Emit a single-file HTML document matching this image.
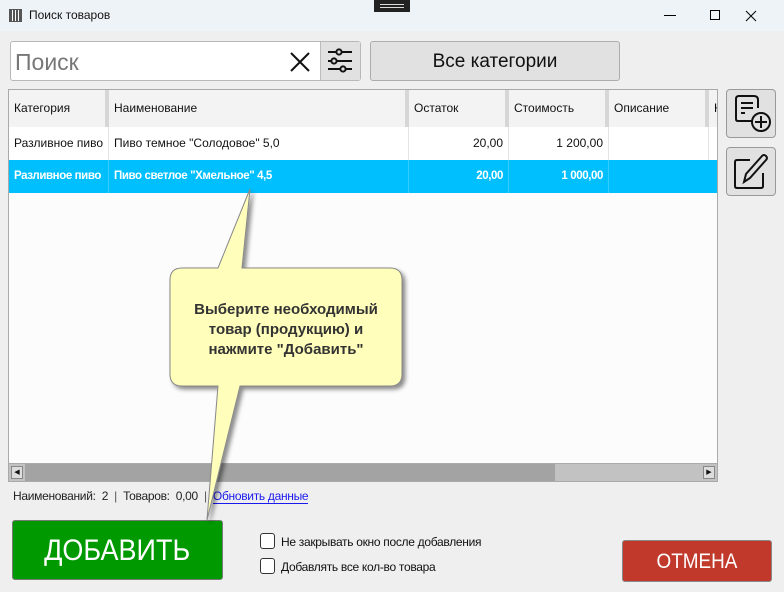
<!DOCTYPE html>
<html><head><meta charset="utf-8"><style>
*{box-sizing:border-box;margin:0;padding:0}
body{width:784px;height:592px;background:#efefef;font-family:"Liberation Sans","DejaVu Sans",sans-serif;position:relative;overflow:hidden;font-size:12px;color:#111}
.a{position:absolute}
.title{left:0;top:0;width:784px;height:31px;background:#eef3f8}
.cell{position:absolute;height:33px;line-height:33px;padding:0 5px;font-size:12px;white-space:nowrap;overflow:hidden;border-right:1px solid #e4e4e4}
.b{color:#fff;font-weight:bold;border-color:#33ccff;letter-spacing:-0.4px;font-size:11.5px}
.hd{position:absolute;top:0;height:37px;line-height:37px;padding:0 5px;font-size:12px;border-right:4px solid #d6d6d6;background:#f3f3f3}
</style></head><body>
<div class="a title"></div>
<div class="a" style="left:9px;top:9px;width:13px;height:13px;border:1px solid #555;background:repeating-linear-gradient(90deg,#555 0 2px,#fff 2px 3px)"></div>
<div class="a" style="left:29px;top:8px;font-size:12px">Поиск товаров</div>
<div class="a" style="left:374px;top:0;width:36px;height:12px;background:#222"></div>
<div class="a" style="left:380px;top:4px;width:24px;height:1px;background:#ddd"></div><div class="a" style="left:380px;top:7px;width:24px;height:1px;background:#ddd"></div>
<div class="a" style="left:664px;top:15px;width:12px;height:1px;background:#000"></div>
<div class="a" style="left:710px;top:10px;width:10px;height:10px;border:1px solid #000"></div>
<svg class="a" style="left:745px;top:10px" width="12" height="12"><path d="M1 1L11 11M11 1L1 11" stroke="#000" stroke-width="1"/></svg>

<div class="a" style="left:10px;top:41px;width:351px;height:40px;border:1px solid #b8b8b8;border-radius:3px;background:#fff"></div>
<div class="a" style="left:15px;top:49px;font-size:23px;color:#777">Поиск</div>
<svg class="a" style="left:289px;top:51px" width="22" height="22"><path d="M2 2L20 20M20 2L2 20" stroke="#111" stroke-width="2"/></svg>
<div class="a" style="left:320px;top:42px;width:40px;height:38px;background:#e1e1e1;border-left:1px solid #bbb"></div>
<svg class="a" style="left:327px;top:48px" width="26" height="26" fill="none" stroke="#111" stroke-width="2"><path d="M1 4H9M15 4H25M1 13H4M10 13H25M1 21H13M19 21H25"/><circle cx="12" cy="4" r="2.6"/><circle cx="7" cy="13" r="2.6"/><circle cx="16" cy="21" r="2.6"/></svg>
<div class="a" style="left:370px;top:41px;width:250px;height:40px;border:1px solid #adadad;border-radius:3px;background:#e1e1e1;text-align:center;line-height:40px;font-size:19px">Все категории</div>

<div class="a" style="left:8px;top:89px;width:710px;height:393px;border:1px solid #aaa;background:#fcfcfc;overflow:hidden">
 <div class="a" style="left:0;top:0;width:710px;height:37px;background:#f3f3f3;border-bottom:1px solid #ccc"></div>
 <div class="hd" style="left:0;width:100px">Категория</div>
 <div class="hd" style="left:100px;width:300px">Наименование</div>
 <div class="hd" style="left:400px;width:100px">Остаток</div>
 <div class="hd" style="left:500px;width:100px">Стоимость</div>
 <div class="hd" style="left:600px;width:100px">Описание</div>
 <div class="hd" style="left:700px;width:20px;border:none">К</div>
 <div class="a" style="left:0;top:37px;width:710px;height:33px;background:#fff"></div>
 <div class="cell" style="left:0;top:37px;width:100px">Разливное пиво</div>
 <div class="cell" style="left:100px;top:37px;width:300px">Пиво темное "Солодовое" 5,0</div>
 <div class="cell" style="left:400px;top:37px;width:100px;text-align:right">20,00</div>
 <div class="cell" style="left:500px;top:37px;width:100px;text-align:right">1 200,00</div>
 <div class="cell" style="left:600px;top:37px;width:100px"></div>
 <div class="a" style="left:0;top:70px;width:710px;height:33px;background:#00bfff"></div>
 <div class="cell b" style="left:0;top:70px;width:100px">Разливное пиво</div>
 <div class="cell b" style="left:100px;top:70px;width:300px">Пиво светлое "Хмельное" 4,5</div>
 <div class="cell b" style="left:400px;top:70px;width:100px;text-align:right">20,00</div>
 <div class="cell b" style="left:500px;top:70px;width:100px;text-align:right">1 000,00</div>
 <div class="a" style="left:0;top:373px;width:710px;height:19px;background:#c2c2c2;border-top:1px solid #aaa"></div>
 <div class="a" style="left:16px;top:374px;width:530px;height:17px;background:#a3a3a3"></div>
 <div class="a" style="left:2px;top:376px;width:12px;height:13px;background:#ddd;border:1px solid #888;font-size:7px;line-height:11px;text-align:center">◀</div>
 <div class="a" style="left:694px;top:376px;width:12px;height:13px;background:#ddd;border:1px solid #888;font-size:7px;line-height:11px;text-align:center">▶</div>
</div>

<div class="a" style="left:726px;top:89px;width:50px;height:49px;border:1px solid #999;border-radius:4px;background:#e1e1e1"></div>
<svg class="a" style="left:732px;top:94px" width="40" height="40" fill="none" stroke="#111" stroke-width="2"><path d="M20 27H6Q4 27 4 25V5Q4 2 7 2H22Q26 2 26 6V14M9 9H21M9 14H21M9 19H13"/><circle cx="29" cy="28" r="9"/><path d="M29 22V34M23 28H35"/></svg>
<div class="a" style="left:726px;top:147px;width:50px;height:49px;border:1px solid #999;border-radius:4px;background:#e1e1e1"></div>
<svg class="a" style="left:732px;top:151px" width="40" height="40" fill="none" stroke="#111" stroke-width="2"><path d="M18 9H5Q3 9 3 11V35Q3 37 5 37H29Q31 37 31 35V22"/><path d="M12 31L14 23L30 5Q32 3 34 5Q36 7 34 9L18 27Z"/></svg>

<div class="a" style="left:13px;top:489px;font-size:12px;color:#222;letter-spacing:-0.3px">Наименований:&nbsp; 2 &nbsp;<span style="color:#555">|</span>&nbsp; Товаров:&nbsp; 0,00 &nbsp;<span style="color:#555">|</span>&nbsp; <span style="color:#1a1aee;border-bottom:1px solid #1a1aee">Обновить данные</span></div>

<div class="a" style="left:12px;top:520px;width:211px;height:60px;background:#009a00;border:1px solid #777;border-radius:3px;color:#fff;font-size:30px;text-align:center;line-height:60px"><span style="display:inline-block;transform:scaleX(0.9)">ДОБАВИТЬ</span></div>
<div class="a" style="left:260px;top:533px;width:15px;height:16px;border:1px solid #333;border-radius:3px;background:#fff"></div>
<div class="a" style="left:281px;top:535px;font-size:12px;letter-spacing:-0.3px">Не закрывать окно после добавления</div>
<div class="a" style="left:260px;top:558px;width:15px;height:16px;border:1px solid #333;border-radius:3px;background:#fff"></div>
<div class="a" style="left:281px;top:560px;font-size:12px;letter-spacing:-0.3px">Добавлять все кол-во товара</div>
<div class="a" style="left:622px;top:540px;width:150px;height:42px;background:#c0392b;border:1px solid #888;border-radius:3px;color:#fff;font-size:21px;text-align:center;line-height:42px"><span style="display:inline-block;transform:scaleX(0.9)">ОТМЕНА</span></div>

<svg class="a" style="left:0;top:0" width="784" height="592">
<defs><filter id="s" x="-20%" y="-20%" width="140%" height="140%"><feDropShadow dx="3" dy="3" stdDeviation="2" flood-color="#000" flood-opacity="0.45"/></filter></defs>
<path filter="url(#s)" d="M182 268H218L250 189L242 268H390Q402 268 402 280V374Q402 386 390 386H240L207 520L218 386H182Q170 386 170 374V280Q170 268 182 268Z" fill="#ffffbb" stroke="#888" stroke-width="1"/>
<text x="286" y="314" text-anchor="middle" font-family="Liberation Sans" font-weight="bold" font-size="15" fill="#333">Выберите необходимый</text>
<text x="286" y="334" text-anchor="middle" font-family="Liberation Sans" font-weight="bold" font-size="15" fill="#333">товар (продукцию) и</text>
<text x="286" y="354" text-anchor="middle" font-family="Liberation Sans" font-weight="bold" font-size="15" fill="#333">нажмите "Добавить"</text>
</svg>
</body></html>
